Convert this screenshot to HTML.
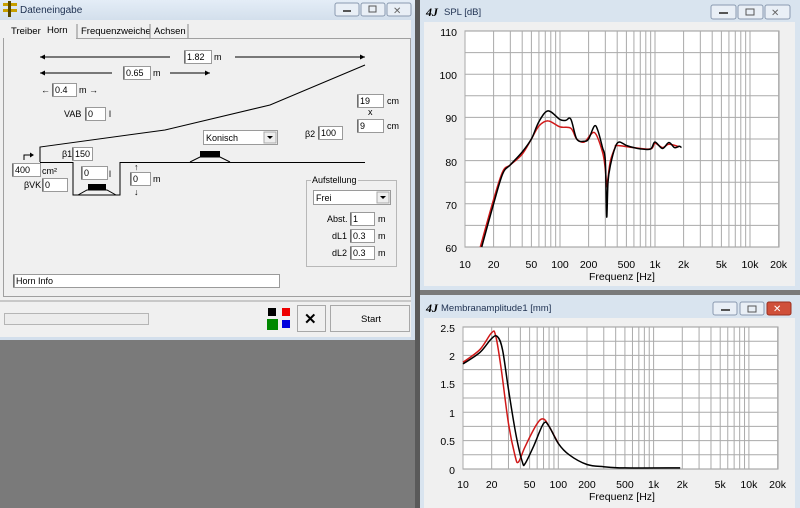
<!DOCTYPE html>
<html><head><meta charset="utf-8"><style>
body{margin:0;width:800px;height:508px;overflow:hidden;background:#7d7d7d;font-family:"Liberation Sans",sans-serif;}
svg{display:block}
</style></head><body>
<svg id="s" width="800" height="508" xmlns="http://www.w3.org/2000/svg" font-family="Liberation Sans, sans-serif">
<defs>
<linearGradient id="tb" x1="0" y1="0" x2="0" y2="1"><stop offset="0" stop-color="#e4edf7"/><stop offset="1" stop-color="#d3dfec"/></linearGradient>
</defs>
<rect width="800" height="508" fill="#7a7a7a"/>
<rect x="415" y="0" width="5" height="508" fill="#5a5a5a"/>
<!-- LEFT DIALOG -->
<rect x="0" y="0" width="415" height="340" fill="#f0f0f0"/>
<rect x="0" y="0" width="415" height="20" fill="url(#tb)"/>
<rect x="411" y="20" width="4" height="320" fill="#d3dfec"/>
<rect x="0" y="337" width="415" height="3" fill="#d3dfec"/>
<g fill="#c8a000"><rect x="3" y="3" width="14" height="3"/><rect x="3" y="9" width="14" height="3"/><rect x="8" y="1" width="3" height="16" fill="#5a4a00"/></g>
<text x="20" y="13" font-size="10" fill="#1e3050">Dateneingabe</text>
<g stroke="#8a9ab0" fill="#e9eff6"><rect x="335" y="3" width="24" height="13" rx="2"/><rect x="361" y="3" width="24" height="13" rx="2"/><rect x="387" y="3" width="24" height="13" rx="2"/></g>
<rect x="343" y="10" width="8" height="2" fill="#555"/><rect x="369" y="6" width="7" height="6" fill="none" stroke="#555"/>
<text x="393" y="14" font-size="10" fill="#666">✕</text>
<g font-size="9.5" fill="#000">
<text x="11" y="34">Treiber</text><text x="47" y="33">Horn</text>
<text x="81" y="34">Frequenzweiche</text><text x="154" y="34">Achsen</text></g>
<g stroke="#888"><line x1="77" y1="24" x2="77" y2="38"/><line x1="150" y1="24" x2="150" y2="38"/><line x1="188" y1="24" x2="188" y2="38"/></g>
<rect x="3.5" y="38.5" width="407" height="258" fill="none" stroke="#a0a0a0"/>
<line x1="4" y1="38.5" x2="76" y2="38.5" stroke="#f0f0f0"/>
<g stroke="#000" fill="none" stroke-width="1">
<line x1="40" y1="57" x2="170" y2="57"/><line x1="235" y1="57" x2="365" y2="57"/>
<line x1="40" y1="73" x2="112" y2="73"/><line x1="170" y1="73" x2="210" y2="73"/>
<polyline points="40,162 40,147 165,130 270,105 365,65"/>
<line x1="40" y1="162.5" x2="73" y2="162.5"/><line x1="120" y1="162.5" x2="365" y2="162.5"/>
<polyline points="73,162 73,195 120,195 120,162"/>
<polyline points="190,162 200,157 220,157 230,162"/>
<polyline points="78,195 87,190 107,190 116,195"/>
<polyline points="24,160 24,155 33,155"/>
</g>
<g fill="#000"><polygon points="40,57 45,54.5 45,59.5"/><polygon points="365,57 360,54.5 360,59.5"/><polygon points="40,73 45,70.5 45,75.5"/><polygon points="210,73 205,70.5 205,75.5"/><polygon points="34,155 30,152.5 30,157.5"/>
<rect x="200" y="151" width="20" height="6"/><rect x="88" y="184" width="18" height="6"/></g>
<g font-size="9" fill="#000">
<text x="41" y="93">←</text><text x="79" y="93">m →</text>
<text x="214" y="60">m</text><text x="153" y="76">m</text>
<text x="64" y="117">VAB</text><text x="109" y="117">l</text>
<text x="62" y="157">β1</text><text x="42" y="174">cm²</text><text x="24" y="188">βVK</text>
<text x="109" y="177">l</text><text x="153" y="182">m</text>
<text x="134" y="170">↑</text><text x="134" y="195">↓</text>
<text x="305" y="137">β2</text><text x="387" y="104">cm</text><text x="368" y="115">x</text><text x="387" y="129">cm</text>
<text x="327" y="222">Abst.</text><text x="332" y="239">dL1</text><text x="332" y="256">dL2</text>
<text x="378" y="222">m</text><text x="378" y="239">m</text><text x="378" y="256">m</text>
</g>
<g id="boxes" font-size="9"></g>
<rect x="306.5" y="180.5" width="90" height="86" fill="none" stroke="#b8b8b8"/>
<rect x="311" y="176" width="47" height="8" fill="#f0f0f0"/>
<text x="312" y="183" font-size="9">Aufstellung</text>
<g stroke="#a0a0a0"><line x1="0" y1="301" x2="411" y2="301"/></g>
<rect x="4.5" y="313.5" width="144" height="11" fill="#ececec" stroke="#b5b5b5"/>
<rect x="268" y="308" width="8" height="8" fill="#000"/><rect x="282" y="308" width="8" height="8" fill="#e00"/>
<rect x="267" y="319" width="11" height="11" fill="#080"/><rect x="282" y="320" width="8" height="8" fill="#00d"/>
<rect x="297.5" y="305.5" width="28" height="26" fill="#f0f0f0" stroke="#a8a8a8"/>
<text x="304" y="324" font-size="15" font-weight="bold">✕</text>
<rect x="330.5" y="305.5" width="79" height="26" fill="#f0f0f0" stroke="#a8a8a8"/>
<text x="361" y="322" font-size="9.5">Start</text>
<!-- SPL WINDOW -->
<rect x="420" y="0" width="380" height="290" fill="#d9e4ef"/>
<rect x="424" y="22" width="371" height="264" fill="#f0f0f0"/>
<text x="426" y="16" font-size="12" font-weight="bold" font-style="italic" font-family="Liberation Serif,serif">4J</text>
<text x="444" y="15" font-size="9.5" fill="#1e3050">SPL [dB]</text>
<g stroke="#8a9ab0" fill="#e9eff6"><rect x="711" y="5" width="25" height="14" rx="2"/><rect x="738" y="5" width="25" height="14" rx="2"/><rect x="765" y="5" width="25" height="14" rx="2"/></g>
<rect x="719" y="12" width="9" height="2" fill="#555"/><rect x="746" y="9" width="8" height="6" fill="none" stroke="#555"/><text x="771" y="16" font-size="10" fill="#666">✕</text>
<rect x="465" y="31" width="314" height="216" fill="#fff" stroke="#999"/>
<g id="g1" stroke="#aaa" stroke-width="1"></g>
<g font-size="10.5" fill="#000" text-anchor="end"><text x="457" y="36">110</text><text x="457" y="79">100</text><text x="457" y="122">90</text><text x="457" y="166">80</text><text x="457" y="209">70</text><text x="457" y="252">60</text></g>
<g id="xl1" font-size="10.5" text-anchor="middle"></g>
<text x="622" y="280" font-size="10.5" text-anchor="middle">Frequenz [Hz]</text>
<path id="r1" fill="none" stroke="#d01818" stroke-width="1.5"/>
<path id="b1" fill="none" stroke="#000" stroke-width="1.5"/>
<!-- AMP WINDOW -->
<rect x="420" y="295" width="380" height="213" fill="#d9e4ef"/>
<rect x="424" y="318" width="371" height="190" fill="#f0f0f0"/>
<text x="426" y="312" font-size="12" font-weight="bold" font-style="italic" font-family="Liberation Serif,serif">4J</text>
<text x="441" y="311" font-size="9.5" fill="#1e3050">Membranamplitude1 [mm]</text>
<g stroke="#8a9ab0" fill="#e9eff6"><rect x="713" y="302" width="24" height="13" rx="2"/><rect x="740" y="302" width="24" height="13" rx="2"/></g>
<rect x="767" y="302" width="24" height="13" rx="2" fill="#d0503a" stroke="#9a3020"/>
<rect x="721" y="309" width="9" height="2" fill="#555"/><rect x="748" y="306" width="8" height="6" fill="none" stroke="#555"/><text x="773" y="312" font-size="10" fill="#fff">✕</text>
<rect x="463" y="327" width="315" height="142" fill="#fff" stroke="#999"/>
<g id="g2" stroke="#aaa" stroke-width="1"></g>
<g font-size="10.5" fill="#000" text-anchor="end"><text x="455" y="332">2.5</text><text x="455" y="360">2</text><text x="455" y="388">1.5</text><text x="455" y="417">1</text><text x="455" y="445">0.5</text><text x="455" y="474">0</text></g>
<g id="xl2" font-size="10.5" text-anchor="middle"></g>
<text x="622" y="500" font-size="10.5" text-anchor="middle">Frequenz [Hz]</text>
<path id="r2" fill="none" stroke="#d01818" stroke-width="1.5"/>
<path id="b2" fill="none" stroke="#000" stroke-width="1.5"/>
</svg>
<script>
var NS="http://www.w3.org/2000/svg",s=document.getElementById('s');
function el(p,t,a,txt){var e=document.createElementNS(NS,t);for(var k in a)e.setAttribute(k,a[k]);if(txt!==undefined)e.textContent=txt;document.getElementById(p).appendChild(e);return e;}
var bx=[[184,50,27,"1.82"],[123,66,27,"0.65"],[52,83,24,"0.4"],[85,107,20,"0"],[72,147,20,"150"],[12,163,28,"400"],[42,178,25,"0"],[81,166,26,"0"],[130,172,20,"0"],[318,126,24,"100"],[357,94,26,"19"],[357,119,26,"9"],[350,212,24,"1"],[350,229,24,"0.3"],[350,246,24,"0.3"],[13,274,266,"Horn Info"]];
bx.forEach(function(b){el('boxes','rect',{x:b[0]+.5,y:b[1]+.5,width:b[2],height:13,fill:'#fff',stroke:'#9a9a9a'});el('boxes','line',{x1:b[0]+1,y1:b[1]+1,x2:b[0]+1,y2:b[1]+13,stroke:'#444'});el('boxes','text',{x:b[0]+3,y:b[1]+10},b[3]);});
[[203,130,74,"Konisch"],[313,190,77,"Frei"]].forEach(function(b){el('boxes','rect',{x:b[0]+.5,y:b[1]+.5,width:b[2],height:14,fill:'#fff',stroke:'#9a9a9a'});el('boxes','rect',{x:b[0]+b[2]-13,y:b[1]+2,width:12,height:11,fill:'#eee',stroke:'#aaa'});el('boxes','polygon',{points:(b[0]+b[2]-10)+','+(b[1]+6)+' '+(b[0]+b[2]-4)+','+(b[1]+6)+' '+(b[0]+b[2]-7)+','+(b[1]+9),fill:'#000'});el('boxes','text',{x:b[0]+3,y:b[1]+11},b[3]);});
function grid(g,x0,dec,y0,y1,yl){
 for(var d=1;d<=1000;d*=10)for(var m=1;m<10;m++){var f=10*d*m;if(f>20000)break;var x=x0+dec*Math.log10(f/10);el(g,'line',{x1:x,y1:y0,x2:x,y2:y1});}
 yl.forEach(function(y){el(g,'line',{x1:x0,y1:y,x2:x0+dec*3.301,y2:y});});
}
var y1=[],y2=[];for(var i=1;i<10;i++){y1.push(31+i*21.6);}for(i=1;i<10;i++){y2.push(327+i*14.2);}
grid('g1',465,95,31,247,y1);grid('g2',463,95.3,327,469,y2);
var L=[[10,"10"],[20,"20"],[50,"50"],[100,"100"],[200,"200"],[500,"500"],[1000,"1k"],[2000,"2k"],[5000,"5k"],[10000,"10k"],[20000,"20k"]];
L.forEach(function(l){el('xl1','text',{x:465+95*Math.log10(l[0]/10),y:268},l[1]);el('xl2','text',{x:463+95.3*Math.log10(l[0]/10),y:488},l[1]);});
function path(id,pts,fx,fy){
 var P=pts.map(function(p){return [fx(p[0]),fy(p[1])];});
 var d='M'+P[0][0].toFixed(1)+','+P[0][1].toFixed(1);
 for(var i=0;i<P.length-1;i++){var p0=P[i-1]||P[i],p1=P[i],p2=P[i+1],p3=P[i+2]||p2;var t=1/6;
  d+='C'+(p1[0]+(p2[0]-p0[0])*t).toFixed(1)+','+(p1[1]+(p2[1]-p0[1])*t).toFixed(1)+' '+(p2[0]-(p3[0]-p1[0])*t).toFixed(1)+','+(p2[1]-(p3[1]-p1[1])*t).toFixed(1)+' '+p2[0].toFixed(1)+','+p2[1].toFixed(1);}
 document.getElementById(id).setAttribute('d',d);}
var X1=function(f){return 465+95*Math.log10(f/10)},Y1=function(d){return 247-(d-60)*4.32};
var X2=function(f){return 463+95.3*Math.log10(f/10)},Y2=function(a){return 469-a*56.8};
path('b1',[[15,60],[20,70],[25,77],[30,79],[40,82],[50,85],[60,89],[75,91.5],[100,89.5],[115,89.3],[130,89.6],[150,85],[180,84.5],[200,85],[230,88],[250,87],[280,83],[300,80],[310,67],[320,75],[340,79],[380,83],[420,84.3],[500,83.5],[600,83],[700,82.7],[900,82.7],[1000,84.3],[1200,82.8],[1400,84.2],[1600,83],[1800,83.3],[1900,83]],X1,Y1);
path('r1',[[14.5,60],[20,71],[25,77.5],[30,79],[40,81.5],[50,85],[60,88],[75,89.2],[100,87.8],[130,87.5],[150,85],[180,84.3],[230,86.5],[280,82],[300,78],[310,74],[320,76],[340,80],[380,83],[400,83.5],[600,83],[900,82.7],[1000,84],[1200,83],[1400,83.8],[1800,83.2]],X1,Y1);
path('r2',[[10,1.88],[15,2.1],[20,2.4],[22,2.35],[25,1.8],[30,0.8],[35,0.25],[38,0.12],[45,0.4],[60,0.8],[70,0.88],[80,0.75],[100,0.45]],X2,Y2);
path('b2',[[10,1.85],[15,2.05],[20,2.3],[23,2.33],[26,2.1],[30,1.4],[36,0.6],[42,0.12],[45,0.1],[55,0.4],[70,0.8],[80,0.75],[100,0.45],[130,0.25],[200,0.08],[300,0.04],[500,0.02],[1900,0.02]],X2,Y2);
</script>
</body></html>
